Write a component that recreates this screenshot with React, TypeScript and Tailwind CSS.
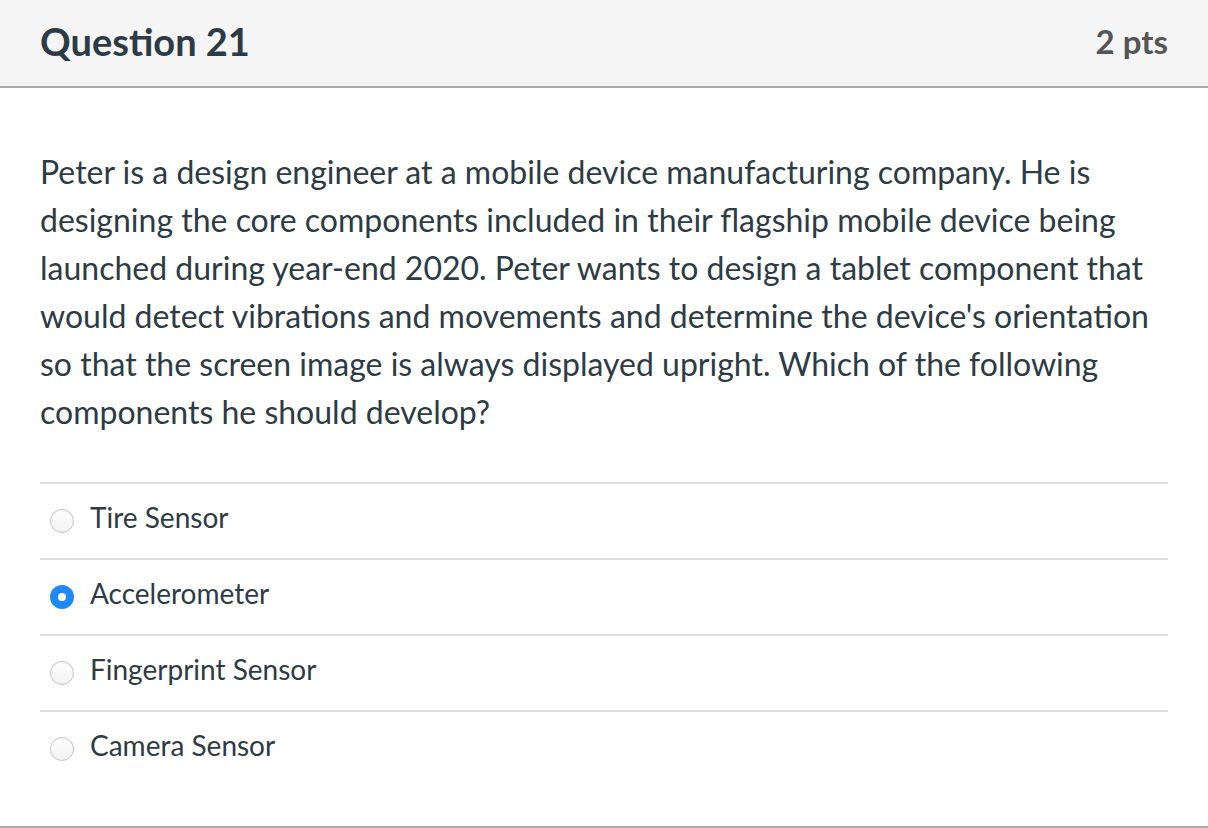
import React from 'react';

const answers = [
  { id: 'a1', label: 'Tire Sensor', checked: false },
  { id: 'a2', label: 'Accelerometer', checked: true },
  { id: 'a3', label: 'Fingerprint Sensor', checked: false },
  { id: 'a4', label: 'Camera Sensor', checked: false },
];

function Radio({ checked }: { checked: boolean }) {
  if (checked) {
    return (
      <span className="flex h-6 w-6 items-center justify-center rounded-full bg-[#1e88f5]">
        <span className="h-2 w-2 rounded-full bg-white" />
      </span>
    );
  }
  return (
    <span className="h-6 w-6 rounded-full border border-[#c4c4c4] bg-gradient-to-b from-white to-[#f2f2f2] shadow-[inset_0_1px_1px_rgba(0,0,0,0.05)]" />
  );
}

export default function App() {
  return (
    <div className="h-[828px] w-[1208px] bg-white font-['Lato','Noto_Sans',sans-serif] text-[#2d3b45]">
      {/* Header */}
      <div className="flex h-[88px] items-center justify-between border-b-2 border-[#aaaaaa] bg-[#f5f5f5] px-10 pb-1">
        <h2 className="text-[38px] font-bold leading-none">Question 21</h2>
        <span className="text-[33px] font-bold leading-none text-[#555555]">2 pts</span>
      </div>

      <div className="flex h-[740px] flex-col border-b-2 border-[#aaaaaa] px-10">
        {/* Question text */}
        <p className="mt-[60px] text-[32px] leading-[48px]">
          Peter is a design engineer at a mobile device manufacturing company. He is designing the core components
          included in their flagship mobile device being launched during year-end 2020. Peter wants to design a
          tablet component that would detect vibrations and movements and determine the device's orientation so
          that the screen image is always displayed upright. Which of the following components he should develop?
        </p>

        {/* Answers */}
        <div className="mt-[46px]">
          {answers.map(a => (
            <label
              key={a.id}
              className="flex h-[76px] items-center gap-4 border-t-2 border-[#dddddd] pl-[10px]"
            >
              <Radio checked={a.checked} />
              <span className="pb-[9px] text-[28px] leading-none">{a.label}</span>
            </label>
          ))}
        </div>
      </div>
    </div>
  );
}
